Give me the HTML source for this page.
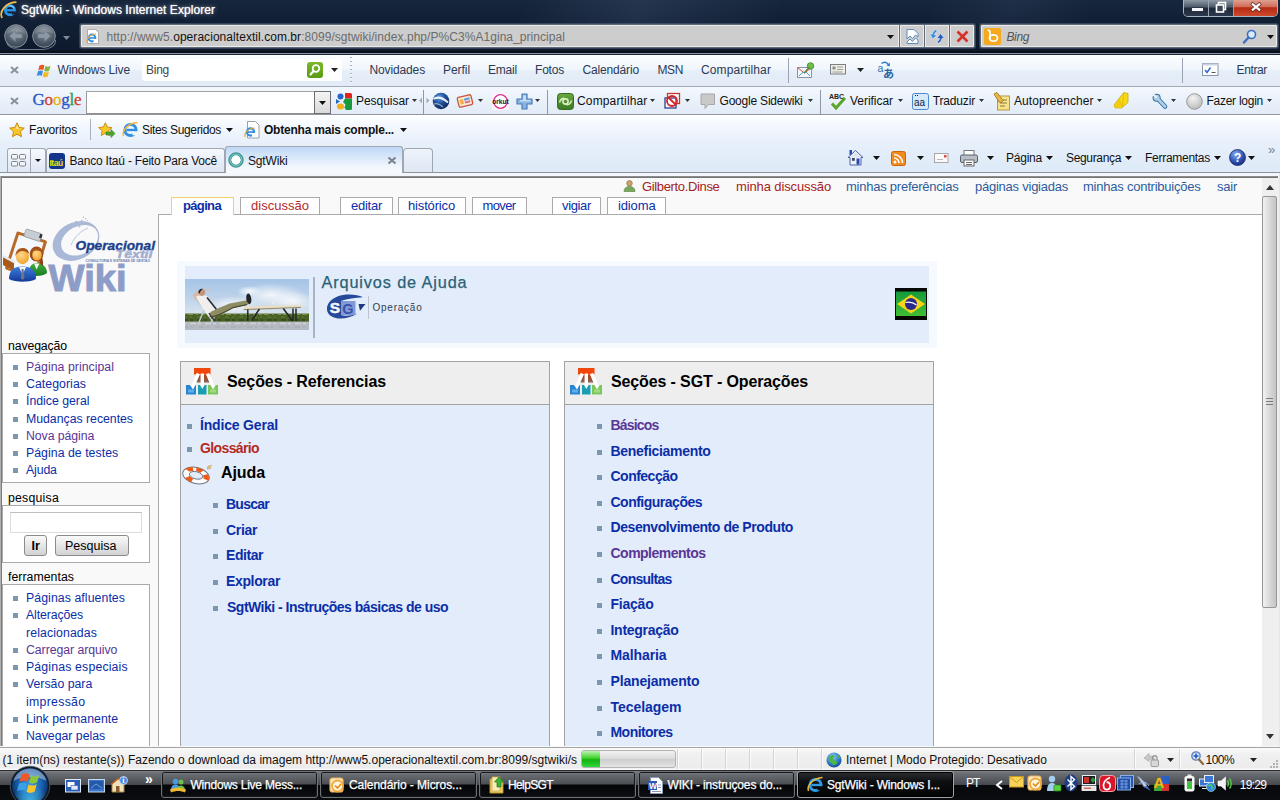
<!DOCTYPE html>
<html lang="pt-BR">
<head>
<meta charset="utf-8">
<title>SgtWiki - Windows Internet Explorer</title>
<style>
*{box-sizing:border-box;margin:0;padding:0}
html,body{width:1280px;height:800px;overflow:hidden;background:#fff}
body{font-family:"Liberation Sans",sans-serif;font-size:12px;color:#000;position:relative}
.abs{position:absolute}
svg{display:block;overflow:visible}
.t{position:absolute;white-space:nowrap}
#page{left:0;top:0;width:1280px;height:746px;background:#f9f9f9;overflow:hidden}
#content{left:158px;top:214px;width:1104px;height:700px;background:#fff;border:1px solid #aaa;border-right:none}
.ptab{position:absolute;top:197px;height:17px;border:1px solid #aaa;border-bottom:none;background:#fff}
.ptab.sel{top:197px;height:18px;border-color:#f5cf6a}
.pbody{position:absolute;left:2px;width:148px;background:#fff;border:1px solid #aaa}
.bul{position:absolute;width:5px;height:5px;background:#7d98ad}
.btn{position:absolute;height:21px;border:1px solid #8b8b8b;border-radius:3px;background:linear-gradient(#fafafa,#e6e6e6 50%,#d2d2d2)}
.sec{position:absolute;width:370px;height:500px;background:#e3ecfa;border:1px solid #a3a3a3}
.sec .hd{position:absolute;left:0;top:0;width:368px;height:43px;background:#eeeeee;border-bottom:1px solid #a3a3a3}
.tbrow{position:absolute;left:0;width:1280px}
.sep{position:absolute;width:1px;background:#9aa4b4}
.tk{position:absolute;top:771px;height:27px;border:1px solid #6e7176;border-radius:3px;background:linear-gradient(#8c8f94 0,#6a6d72 2px,#4b4e53 12px,#050608 13px,#0b0d11 25px);box-shadow:inset 0 0 0 1px #15171a}
.tk.act{background:linear-gradient(#2c2e32,#0d0e10 40%,#040405);border-color:#a0a3a8;box-shadow:inset 0 0 0 1px #000}

</style>
</head>
<body>
<div id="page" class="abs">
<div id="content" class="abs"></div>
<svg class="abs" style="left:623px;top:180px;" width="13" height="12" viewBox="0 0 13 12"><circle cx="6.5" cy="3.3" r="2.8" fill="#c9a36a" stroke="#8a6a3a" stroke-width=".6"/><path d="M1 11.5c0-3.5 2.400-5 5.500-5s5.500 1.500 5.500 5z" fill="#7aa85a" stroke="#55803a" stroke-width=".6"/></svg>
<span class="t" style="left:642px;top:177px;font-size:13px;line-height:19px;color:#a62222;letter-spacing:-0.348px;">Gilberto.Dinse</span>
<span class="t" style="left:736px;top:177px;font-size:13px;line-height:19px;color:#a62222;letter-spacing:-0.122px;">minha discussão</span>
<span class="t" style="left:846px;top:177px;font-size:13px;line-height:19px;color:#2f5c9c;letter-spacing:-0.240px;">minhas preferências</span>
<span class="t" style="left:975px;top:177px;font-size:13px;line-height:19px;color:#2f5c9c;letter-spacing:-0.241px;">páginas vigiadas</span>
<span class="t" style="left:1083px;top:177px;font-size:13px;line-height:19px;color:#2f5c9c;letter-spacing:-0.231px;">minhas contribuições</span>
<span class="t" style="left:1217px;top:177px;font-size:13px;line-height:19px;color:#2f5c9c;letter-spacing:-0.238px;">sair</span>
<div class="ptab sel" style="left:171px;width:63px"></div>
<div class="ptab" style="left:240px;width:80px"></div>
<div class="ptab" style="left:340px;width:53px"></div>
<div class="ptab" style="left:398px;width:68px"></div>
<div class="ptab" style="left:472px;width:55px"></div>
<div class="ptab" style="left:552px;width:49px"></div>
<div class="ptab" style="left:607px;width:59px"></div>
<span class="t" style="left:183px;top:196px;font-size:13px;line-height:19px;color:#0b2ea8;font-weight:bold;letter-spacing:-0.651px;">página</span>
<span class="t" style="left:251px;top:196px;font-size:13px;line-height:19px;color:#b52a2a;letter-spacing:0.021px;">discussão</span>
<span class="t" style="left:351px;top:196px;font-size:13px;line-height:19px;color:#0b2ea8;letter-spacing:-0.255px;">editar</span>
<span class="t" style="left:408px;top:196px;font-size:13px;line-height:19px;color:#0b2ea8;letter-spacing:-0.158px;">histórico</span>
<span class="t" style="left:482.5px;top:196px;font-size:13px;line-height:19px;color:#0b2ea8;letter-spacing:-0.625px;">mover</span>
<span class="t" style="left:562px;top:196px;font-size:13px;line-height:19px;color:#0b2ea8;letter-spacing:-0.346px;">vigiar</span>
<span class="t" style="left:618px;top:196px;font-size:13px;line-height:19px;color:#0b2ea8;letter-spacing:-0.133px;">idioma</span>
<div id="logo" class="abs" style="left:0;top:215px;width:158px;height:90px"><svg width="158" height="90" viewBox="0 0 158 90" style="position:absolute;left:0;top:0">
<defs>
<radialGradient id="fc" cx=".4" cy=".35" r=".7"><stop offset="0" stop-color="#ffd98a"/><stop offset="1" stop-color="#f2a12a"/></radialGradient>
<linearGradient id="bs" x1="0" y1="0" x2="0" y2="1"><stop offset="0" stop-color="#3f7fe0"/><stop offset="1" stop-color="#123a9a"/></linearGradient>
<linearGradient id="gs" x1="0" y1="0" x2="0" y2="1"><stop offset="0" stop-color="#3fae3a"/><stop offset="1" stop-color="#1a7a24"/></linearGradient>
</defs>
<!-- clipboard -->
<g transform="rotate(18 26 40)">
<rect x="10" y="20" width="32" height="40" rx="2" fill="#b86a2a"/>
<rect x="13" y="23" width="26" height="35" fill="#f4f8fc"/>
<rect x="18" y="15" width="17" height="8" rx="1.500" fill="#c8ccd4" stroke="#8a8f98" stroke-width=".6"/>
<rect x="33" y="15.500" width="2.500" height="4" fill="#333"/>
</g>
<path d="M3 42l11 6v8l-11-6z" fill="#a85a1a"/><path d="M3 41l12 6.500" stroke="#e4e8ee" stroke-width="2"/>
<!-- woman -->
<path d="M28.500 60c0-8 3-12 8.500-12s10 4 10 10c-3 3-12 4-18.500 2z" fill="url(#gs)"/>
<path d="M34 48.500l2.500 6 3-6z" fill="#f4f4f4"/>
<ellipse cx="36.500" cy="39" rx="6.800" ry="7.500" fill="#9a4a1a"/>
<ellipse cx="37" cy="40" rx="4.800" ry="5.500" fill="url(#fc)"/>
<path d="M30 39c1-5 5-7 9-6 3 1 4.500 3 4.500 6-2-3-5-4-8-3.500s-4 2-5.500 3.500z" fill="#a8541a"/>
<path d="M42 42c1 4 1.500 7 .5 9l-3-3z" fill="#8a3f14"/>
<!-- man -->
<path d="M9 64c0-8 4-12.500 13.500-12.500S36 56 36 64c-5 3.500-21 3.500-27 0z" fill="url(#bs)"/>
<path d="M19 52l3.500 8 3.500-8z" fill="#f4f6fa"/>
<path d="M21.700 54h1.800l1 9-1.900 2-1.900-2z" fill="#6a7488"/>
<ellipse cx="22.500" cy="42" rx="6.500" ry="7.200" fill="url(#fc)"/>
<path d="M15.500 41c0-5.500 3.500-8.500 8-8 3.500.5 5.500 3 5.500 6-2.500-2.500-6-3.500-9-2.500-2 .7-3.500 2.500-4.500 4.500z" fill="#a8541a"/>
<!-- ring -->
<g transform="rotate(-27 76 26)"><path fill-rule="evenodd" fill="#a9b8d6" d="M51.500 26a24.500 18.500 0 1 0 49 0a24.500 18.500 0 1 0-49 0zM60 27a19.500 14 0 1 1 39 0a19.500 14 0 1 1-39 0z"/></g>
<g fill="#aebcd8"><rect x="72" y="8" width="2" height="2"/><rect x="75" y="6" width="2" height="2"/><rect x="75" y="9.500" width="2" height="2"/><rect x="78" y="7" width="1.800" height="1.800"/><rect x="78.500" y="10.500" width="1.800" height="1.800"/><rect x="81" y="5" width="1.600" height="1.600"/><rect x="81.500" y="8.500" width="1.600" height="1.600"/><rect x="84" y="6.500" width="1.300" height="1.300"/><rect x="85" y="3" width="1.300" height="1.300"/><rect x="83" y="1.500" width="1.200" height="1.200"/><rect x="87" y="5" width="1" height="1"/></g>
<path d="M71 30c4-9 10-14 17-17" fill="none" stroke="#a9b8d6" stroke-width=".8"/>
<text x="75.500" y="34.500" font-family="Liberation Sans,sans-serif" font-size="13.200" font-weight="bold" font-style="italic" fill="#1d3f8c" stroke="#1d3f8c" stroke-width=".35" textLength="79.500" lengthAdjust="spacingAndGlyphs">Operacional</text>
<text x="115.500" y="42.700" font-family="Liberation Sans,sans-serif" font-size="10" font-weight="bold" font-style="italic" fill="#9fadd0" stroke="#9fadd0" stroke-width=".4" textLength="37" lengthAdjust="spacingAndGlyphs">Têxtil</text>
<text x="85.500" y="46.600" font-family="Liberation Sans,sans-serif" font-size="3.600" font-weight="bold" fill="#6a7aa8" textLength="64.500" lengthAdjust="spacingAndGlyphs">CONSULTORIA E SISTEMAS DE GESTÃO</text>
<text x="48.500" y="75.700" font-family="Liberation Sans,sans-serif" font-size="36.500" font-weight="bold" fill="#8e9dc8" stroke="#8e9dc8" stroke-width="1" textLength="78" lengthAdjust="spacingAndGlyphs">Wiki</text>
</svg></div>
<span class="t" style="left:8px;top:337px;font-size:12.3px;line-height:18px;color:#000;letter-spacing:-0.130px;">navegação</span>
<div class="pbody" style="top:353px;height:130px"></div>
<div class="bul" style="left:13px;top:365px"></div>
<span class="t" style="left:26px;top:358px;font-size:12.3px;line-height:18px;color:#5a3696;letter-spacing:0.030px;">Página principal</span>
<div class="bul" style="left:13px;top:382px"></div>
<span class="t" style="left:26px;top:375px;font-size:12.3px;line-height:18px;color:#0b2ea8;letter-spacing:0.053px;">Categorias</span>
<div class="bul" style="left:13px;top:399px"></div>
<span class="t" style="left:26px;top:392px;font-size:12.3px;line-height:18px;color:#0b2ea8;letter-spacing:-0.007px;">Índice geral</span>
<div class="bul" style="left:13px;top:417px"></div>
<span class="t" style="left:26px;top:410px;font-size:12.3px;line-height:18px;color:#0b2ea8;letter-spacing:-0.019px;">Mudanças recentes</span>
<div class="bul" style="left:13px;top:434px"></div>
<span class="t" style="left:26px;top:427px;font-size:12.3px;line-height:18px;color:#5a3696;letter-spacing:-0.078px;">Nova página</span>
<div class="bul" style="left:13px;top:451px"></div>
<span class="t" style="left:26px;top:444px;font-size:12.3px;line-height:18px;color:#0b2ea8;letter-spacing:0.037px;">Página de testes</span>
<div class="bul" style="left:13px;top:468px"></div>
<span class="t" style="left:26px;top:461px;font-size:12.3px;line-height:18px;color:#0b2ea8;letter-spacing:-0.131px;">Ajuda</span>
<span class="t" style="left:8px;top:489px;font-size:12.3px;line-height:18px;color:#000;letter-spacing:0.221px;">pesquisa</span>
<div class="pbody" style="top:505px;height:58px"></div>
<div class="abs" style="left:10px;top:512px;width:132px;height:21px;background:#fff;border:1px solid #dcdcdc;border-top-color:#bdbdbd"></div>
<div class="btn" style="left:24px;top:535px;width:23px"></div>
<div class="btn" style="left:55px;top:535px;width:74px"></div>
<span class="t" style="left:31.5px;top:537px;font-size:12.5px;line-height:18px;color:#000;font-weight:bold;letter-spacing:0.000px;">Ir</span>
<span class="t" style="left:65px;top:537px;font-size:12.5px;line-height:18px;color:#000;letter-spacing:0.000px;">Pesquisa</span>
<span class="t" style="left:8px;top:568px;font-size:12.3px;line-height:18px;color:#000;letter-spacing:0.034px;">ferramentas</span>
<div class="pbody" style="top:584px;height:200px"></div>
<div class="bul" style="left:13px;top:596px"></div>
<span class="t" style="left:26px;top:589px;font-size:12.3px;line-height:18px;color:#0b2ea8;letter-spacing:0.073px;">Páginas afluentes</span>
<div class="bul" style="left:13px;top:613px"></div>
<span class="t" style="left:26px;top:606px;font-size:12.3px;line-height:18px;color:#0b2ea8;letter-spacing:-0.111px;">Alterações</span>
<span class="t" style="left:26px;top:624px;font-size:12.3px;line-height:18px;color:#0b2ea8;letter-spacing:0.105px;">relacionadas</span>
<div class="bul" style="left:13px;top:648px"></div>
<span class="t" style="left:26px;top:641px;font-size:12.3px;line-height:18px;color:#5a3696;letter-spacing:-0.061px;">Carregar arquivo</span>
<div class="bul" style="left:13px;top:665px"></div>
<span class="t" style="left:26px;top:658px;font-size:12.3px;line-height:18px;color:#0b2ea8;letter-spacing:0.157px;">Páginas especiais</span>
<div class="bul" style="left:13px;top:682px"></div>
<span class="t" style="left:26px;top:675px;font-size:12.3px;line-height:18px;color:#0b2ea8;letter-spacing:-0.001px;">Versão para</span>
<span class="t" style="left:26px;top:693px;font-size:12.3px;line-height:18px;color:#0b2ea8;letter-spacing:0.296px;">impressão</span>
<div class="bul" style="left:13px;top:717px"></div>
<span class="t" style="left:26px;top:710px;font-size:12.3px;line-height:18px;color:#0b2ea8;letter-spacing:0.039px;">Link permanente</span>
<div class="bul" style="left:13px;top:734px"></div>
<span class="t" style="left:26px;top:727px;font-size:12.3px;line-height:18px;color:#0b2ea8;letter-spacing:-0.007px;">Navegar pelas</span>
<div class="abs" style="left:177px;top:261px;width:760px;height:87px;background:#f6f9fd"></div>
<div class="abs" style="left:185px;top:266px;width:744px;height:77px;background:#e3ecfa"></div>
<div id="photo" class="abs" style="left:185px;top:279px;width:124px;height:51px"><svg width="124" height="51" viewBox="0 0 124 51" style="position:absolute;left:0;top:0">
<defs><linearGradient id="sky" x1="0" y1="0" x2="0" y2="1"><stop offset="0" stop-color="#a2c2e6"/><stop offset=".45" stop-color="#c3d6ea"/><stop offset=".7" stop-color="#dbe5ef"/><stop offset="1" stop-color="#dbe5ef"/></linearGradient>
<radialGradient id="cl" cx=".5" cy=".5" r=".5"><stop offset="0" stop-color="#fff" stop-opacity=".8"/><stop offset="1" stop-color="#fff" stop-opacity="0"/></radialGradient>
<filter id="pb" x="-5%" y="-5%" width="110%" height="110%"><feGaussianBlur stdDeviation=".45"/></filter>
<clipPath id="pc"><rect width="124" height="51"/></clipPath></defs>
<g clip-path="url(#pc)"><g filter="url(#pb)">
<rect x="-2" y="-2" width="128" height="55" fill="url(#sky)"/>
<ellipse cx="86" cy="16" rx="34" ry="12" fill="url(#cl)"/><ellipse cx="108" cy="22" rx="22" ry="10" fill="url(#cl)"/><ellipse cx="48" cy="26" rx="26" ry="9" fill="url(#cl)"/><ellipse cx="64" cy="12" rx="12" ry="5" fill="url(#cl)"/>
<rect x="-2" y="34.600" width="128" height="9" fill="#4a6126"/>
<path d="M-2 35.400h128" stroke="#7a9246" stroke-width="1.300" stroke-dasharray="3 2 5 3 2 4"/>
<path d="M-2 38h128" stroke="#587432" stroke-width="1.500" stroke-dasharray="4 3 2 5"/>
<path d="M-2 41h128" stroke="#34501a" stroke-width="2.200" stroke-dasharray="5 2 3 4"/>
<rect x="-2" y="42.600" width="128" height="10" fill="#b5b9c1"/>
<path d="M-2 44.500h128" stroke="#cfd2d8" stroke-width="1.400" stroke-dasharray="3 4 6 2"/><path d="M-2 48h128" stroke="#a4a8b2" stroke-width="1.200" stroke-dasharray="5 3 2 6"/>
<!-- chair -->
<path d="M8 16l20 26.500M31 35l-5 8M19 31l-5 12" stroke="#c4c7ce" stroke-width="1.500" fill="none"/>
<!-- table -->
<path d="M58.700 27.600l57.300-1.600v2.600l-57.300 2.200z" fill="#e9dec4"/><path d="M58.700 30.600l57.300-2.200" stroke="#7a6e58" stroke-width=".8"/>
<path d="M62.800 30.500v11M74.400 30l-7.600 11.500M98.300 29.500l9.200 12.500M108 29.500v12.500M111 29.500v12.500" stroke="#23262a" stroke-width="1.500" fill="none"/>
<!-- laptop -->
<path d="M87 25.400l4.200-8.900" stroke="#e9eef4" stroke-width="1.100"/><path d="M81.500 26.200h6" stroke="#d9dee6" stroke-width="1.100"/>
<!-- man -->
<path d="M8.500 15.500c1.500-2.500 4-3 6-2l-1 5.500-3.500 2z" fill="#d9b9a4"/>
<path d="M11 17.500c3.500-1.800 8.500-1.800 12 0l8 12.500c-1.500 3.500-4.500 6-7.500 7l-6-7.500z" fill="#f0efee"/>
<path d="M22 18.500l9.500 12" stroke="#2b2b30" stroke-width="1.600"/>
<circle cx="16.800" cy="13.600" r="3.300" fill="#c39474"/>
<path d="M13.300 13.500c.2-3 2.500-4.300 4.800-3.600-1.800 1-3 2.300-3.300 4.600z" fill="#2a2320"/>
<path d="M20 11.500l5.500-1.200" stroke="#dcc0ac" stroke-width="1.100"/>
<path d="M25.500 33c5-2.800 12-5.500 19-8.500l17.500-3.200 1.300 4.200-16 3.700c-6 3.200-12 7-18.500 9.300-3.500-.2-4.300-3-3.300-5.500z" fill="#8e8c63"/>
<path d="M27 38c7-1.500 14-5.500 21-9.300l14-3" stroke="#4c4a34" stroke-width="1.300" fill="none"/>
<ellipse cx="63.800" cy="19.800" rx="2.500" ry="5.400" fill="#22242a" transform="rotate(-8 63.800 19.800)"/>
<path d="M24 34c1.500 3 3 5.500 6 8" stroke="#3a3a3a" stroke-width="1.400" fill="none"/>
</g></g>
</svg></div>
<div class="abs" style="left:313px;top:277px;width:2px;height:61px;background:#a9b3c2"></div>
<span class="t" style="left:321.5px;top:271px;font-size:16.3px;line-height:22px;color:#2a6276;letter-spacing:0.868px;-webkit-text-stroke:.25px #2a6276;">Arquivos de Ajuda</span>
<div id="sgt" class="abs" style="left:326px;top:294px;width:40px;height:26px"><svg width="40" height="26" viewBox="0 0 40 26" style="position:absolute;left:0;top:0">
<path d="M37 3.200C31 .300 20-.800 11.500 2.500 2.500 6-1.500 13.500 2.500 19.800 6.500 25.500 20 26.800 31.500 19.500 25.500 21.800 19 22 15.500 21.300L15.500 6.800C21 5 29 3.500 37 3.200z" fill="#27499b"/>
<rect x="15.500" y="7" width="14" height="14" fill="#8299d6"/>
<text x="3.800" y="19.300" font-family="Liberation Sans,sans-serif" font-size="15.500" font-weight="bold" fill="#f6f8fc" stroke="#f6f8fc" stroke-width=".5">S</text>
<text x="16.300" y="19.600" font-family="Liberation Sans,sans-serif" font-size="14.500" font-weight="bold" fill="#3554ac">G</text>
<path d="M32.500 10h7l-5.500 6.800z" fill="#1e3884"/>
</svg></div>
<div class="abs" style="left:368px;top:296px;width:1px;height:23px;background:#bcc3ce"></div>
<span class="t" style="left:372.5px;top:300px;font-size:10px;line-height:15px;color:#2e3e52;letter-spacing:0.760px;">Operação</span>
<div id="flag" class="abs" style="left:895px;top:288px;width:32px;height:32px"><svg width="32" height="32" viewBox="0 0 32 32" style="position:absolute;left:0;top:0">
<defs><linearGradient id="fg" x1="0" y1="0" x2="0" y2="1"><stop offset="0" stop-color="#159a3c"/><stop offset="1" stop-color="#41bd35"/></linearGradient></defs>
<rect width="32" height="32" fill="#050805"/>
<rect x="1" y="3.500" width="30" height="24.500" fill="url(#fg)"/>
<path d="M2 16l14-9.500 14 9.500-14 9.500z" fill="#f7d417"/>
<circle cx="16" cy="16" r="6" fill="#2a2a8a"/>
<path d="M10.500 14.500c4-1 8 0 11 2.500" fill="none" stroke="#fff" stroke-width="1.100"/>
</svg></div>
<div class="sec" style="left:180px;top:361px"><div class="hd"></div></div>
<div class="sec" style="left:564px;top:361px"><div class="hd"></div></div>
<svg class="abs" style="left:186px;top:368px" width="33" height="28" viewBox="0 0 33 28">
<defs><linearGradient id="wg186" x1="0" y1="0" x2="0" y2="1"><stop offset="0" stop-color="#c23a10"/><stop offset="1" stop-color="#6a3a22" stop-opacity=".75"/></linearGradient></defs>
<rect x="8" y="0" width="16.500" height="6.500" fill="#f0470c"/>
<path d="M13.800 6.500h1v8h-5z" fill="url(#wg186)"/><path d="M18 6.500h2l3.500 8h-5.500z" fill="url(#wg186)"/>
<path d="M12.300 5.500l-5.300 12.500M16.300 5.500v13.500M21.700 5.500l5 12.500" stroke="#fff" stroke-width="3.300"/>
<rect x="0" y="17" width="10" height="9.500" fill="#2a86d0"/><rect x="12" y="17" width="8.500" height="9.500" fill="#1a9fb2"/><rect x="22" y="17" width="10" height="9.500" fill="#7cc65c"/>
<path d="M4 17l3 4.500 2.500-4.500M14 17l2.300 4 2.300-4M24.500 17l2.500 4.500 2.800-4.500" fill="#fff"/>
<rect x="2" y="21.500" width="6" height="3" fill="#6ab8f0" opacity=".8"/><rect x="24" y="21.500" width="6" height="3" fill="#a8e08a" opacity=".8"/>
</svg>
<svg class="abs" style="left:570px;top:368px" width="33" height="28" viewBox="0 0 33 28">
<defs><linearGradient id="wg570" x1="0" y1="0" x2="0" y2="1"><stop offset="0" stop-color="#c23a10"/><stop offset="1" stop-color="#6a3a22" stop-opacity=".75"/></linearGradient></defs>
<rect x="8" y="0" width="16.500" height="6.500" fill="#f0470c"/>
<path d="M13.800 6.500h1v8h-5z" fill="url(#wg570)"/><path d="M18 6.500h2l3.500 8h-5.500z" fill="url(#wg570)"/>
<path d="M12.300 5.500l-5.300 12.500M16.300 5.500v13.500M21.700 5.500l5 12.500" stroke="#fff" stroke-width="3.300"/>
<rect x="0" y="17" width="10" height="9.500" fill="#2a86d0"/><rect x="12" y="17" width="8.500" height="9.500" fill="#1a9fb2"/><rect x="22" y="17" width="10" height="9.500" fill="#7cc65c"/>
<path d="M4 17l3 4.500 2.500-4.500M14 17l2.300 4 2.300-4M24.500 17l2.500 4.500 2.800-4.500" fill="#fff"/>
<rect x="2" y="21.500" width="6" height="3" fill="#6ab8f0" opacity=".8"/><rect x="24" y="21.500" width="6" height="3" fill="#a8e08a" opacity=".8"/>
</svg>
<span class="t" style="left:227px;top:370px;font-size:16px;line-height:23px;color:#000;font-weight:bold;letter-spacing:-0.099px;">Seções - Referencias</span>
<span class="t" style="left:611px;top:370px;font-size:16px;line-height:23px;color:#000;font-weight:bold;letter-spacing:-0.128px;">Seções - SGT - Operações</span>
<div class="bul" style="left:187px;top:424px"></div><span class="t" style="left:200px;top:415px;font-size:14px;line-height:20px;color:#0b2ea8;font-weight:bold;letter-spacing:-0.180px;">Índice Geral</span>
<div class="bul" style="left:187px;top:447px"></div><span class="t" style="left:200px;top:438px;font-size:14px;line-height:20px;color:#b52a1f;font-weight:bold;letter-spacing:-0.622px;">Glossário</span>
<svg class="abs" style="left:181px;top:463px" width="32" height="24" viewBox="0 0 32 24">
<g transform="rotate(14 15 12.500)">
<ellipse cx="15" cy="12.500" rx="13.500" ry="8" fill="#fbfbfb" stroke="#6c727c" stroke-width="1"/>
<path d="M3 8.500a13.500 8 0 0 1 6.500-3.500l2 3.500a7 3.800 0 0 0-3.500 2z" fill="#ee5a14"/>
<path d="M13.500 4.600a13.500 8 0 0 1 7.500 1l-2.500 3.200a7 3.800 0 0 0-4.500-.6z" fill="#ee5a14"/>
<path d="M26 8.500a13.500 8 0 0 1 2.300 6l-5.500-.8a7 3.800 0 0 0-1.300-3z" fill="#ee5a14"/>
<path d="M5 17.500a13.500 8 0 0 0 7 2.800l1-4a7 3.800 0 0 1-4-1.800z" fill="#ee5a14"/>
<ellipse cx="15" cy="12.300" rx="6.800" ry="3.600" fill="#e3ecfa" stroke="#6c727c" stroke-width=".9"/>
</g>
<path d="M27 6.500c-1.500-2 .5-4 2-3s0 2.500-1 2 1-3.500 3-3" fill="none" stroke="#d4b070" stroke-width="1.100"/>
</svg>
<span class="t" style="left:221px;top:461px;font-size:16px;line-height:23px;color:#000;font-weight:bold;letter-spacing:-0.091px;">Ajuda</span>
<div class="bul" style="left:213px;top:503px"></div><span class="t" style="left:226px;top:494px;font-size:14px;line-height:20px;color:#0b2ea8;font-weight:bold;letter-spacing:-0.745px;">Buscar</span>
<div class="bul" style="left:213px;top:529px"></div><span class="t" style="left:226px;top:520px;font-size:14px;line-height:20px;color:#0b2ea8;font-weight:bold;letter-spacing:-0.338px;">Criar</span>
<div class="bul" style="left:213px;top:554px"></div><span class="t" style="left:226px;top:545px;font-size:14px;line-height:20px;color:#0b2ea8;font-weight:bold;letter-spacing:-0.448px;">Editar</span>
<div class="bul" style="left:213px;top:580px"></div><span class="t" style="left:226px;top:571px;font-size:14px;line-height:20px;color:#0b2ea8;font-weight:bold;letter-spacing:-0.352px;">Explorar</span>
<div class="bul" style="left:213px;top:606px"></div><span class="t" style="left:227px;top:597px;font-size:14px;line-height:20px;color:#0b2ea8;font-weight:bold;letter-spacing:-0.506px;">SgtWiki - Instruções básicas de uso</span>
<div class="bul" style="left:597px;top:424px"></div><span class="t" style="left:610.5px;top:415px;font-size:14px;line-height:20px;color:#5a3696;font-weight:bold;letter-spacing:-0.815px;">Básicos</span>
<div class="bul" style="left:597px;top:450px"></div><span class="t" style="left:610.5px;top:441px;font-size:14px;line-height:20px;color:#0b2ea8;font-weight:bold;letter-spacing:-0.304px;">Beneficiamento</span>
<div class="bul" style="left:597px;top:475px"></div><span class="t" style="left:610.5px;top:466px;font-size:14px;line-height:20px;color:#0b2ea8;font-weight:bold;letter-spacing:-0.509px;">Confecção</span>
<div class="bul" style="left:597px;top:501px"></div><span class="t" style="left:610.5px;top:492px;font-size:14px;line-height:20px;color:#0b2ea8;font-weight:bold;letter-spacing:-0.501px;">Configurações</span>
<div class="bul" style="left:597px;top:526px"></div><span class="t" style="left:610.5px;top:517px;font-size:14px;line-height:20px;color:#0b2ea8;font-weight:bold;letter-spacing:-0.431px;">Desenvolvimento de Produto</span>
<div class="bul" style="left:597px;top:552px"></div><span class="t" style="left:610.5px;top:543px;font-size:14px;line-height:20px;color:#5a3696;font-weight:bold;letter-spacing:-0.510px;">Complementos</span>
<div class="bul" style="left:597px;top:578px"></div><span class="t" style="left:610.5px;top:569px;font-size:14px;line-height:20px;color:#0b2ea8;font-weight:bold;letter-spacing:-0.743px;">Consultas</span>
<div class="bul" style="left:597px;top:603px"></div><span class="t" style="left:610.5px;top:594px;font-size:14px;line-height:20px;color:#0b2ea8;font-weight:bold;letter-spacing:-0.227px;">Fiação</span>
<div class="bul" style="left:597px;top:629px"></div><span class="t" style="left:610.5px;top:620px;font-size:14px;line-height:20px;color:#0b2ea8;font-weight:bold;letter-spacing:-0.281px;">Integração</span>
<div class="bul" style="left:597px;top:654px"></div><span class="t" style="left:610.5px;top:645px;font-size:14px;line-height:20px;color:#0b2ea8;font-weight:bold;letter-spacing:-0.102px;">Malharia</span>
<div class="bul" style="left:597px;top:680px"></div><span class="t" style="left:610.5px;top:671px;font-size:14px;line-height:20px;color:#0b2ea8;font-weight:bold;letter-spacing:-0.169px;">Planejamento</span>
<div class="bul" style="left:597px;top:706px"></div><span class="t" style="left:610.5px;top:697px;font-size:14px;line-height:20px;color:#0b2ea8;font-weight:bold;letter-spacing:-0.038px;">Tecelagem</span>
<div class="bul" style="left:597px;top:731px"></div><span class="t" style="left:610.5px;top:722px;font-size:14px;line-height:20px;color:#0b2ea8;font-weight:bold;letter-spacing:-0.543px;">Monitores</span>
<div class="abs" style="left:0px;top:172px;width:1280px;height:1px;background:#8e949c"></div>
<div class="abs" style="left:0px;top:173px;width:1280px;height:3px;background:#f3f6fb"></div>
<div class="abs" style="left:0px;top:176px;width:1278px;height:1px;background:#8c8c8c"></div>
<div class="abs" style="left:0px;top:177px;width:1278px;height:1px;background:#747474"></div>
<div class="abs" style="left:0px;top:176px;width:1px;height:570px;background:#b0b0b0"></div>
<div class="abs" style="left:1px;top:176px;width:1px;height:570px;background:#7c7c7c"></div>
<div class="abs" style="left:1262px;top:178px;width:17px;height:568px;background:#efefef"></div>
<div class="abs" style="left:1279px;top:173px;width:1px;height:573px;background:#dfe6f0"></div>
<div class="abs" style="left:1262px;top:196px;width:15px;height:412px;background:linear-gradient(90deg,#f2f2f2,#dcdcdc 45%,#c4c4c4);border:1px solid #979797;border-radius:2px"></div>
<svg class="abs" style="left:1266px;top:185px;" width="8" height="5" viewBox="0 0 8 5"><path d="M0 5l4-5 4 5z" fill="#333"/></svg>
<svg class="abs" style="left:1266px;top:734px;" width="8" height="5" viewBox="0 0 8 5"><path d="M0 0l4 5 4-5z" fill="#333"/></svg>
<div class="abs" style="left:1266px;top:398px;width:7px;height:1px;background:#7a7a7a"></div>
<div class="abs" style="left:1266px;top:401px;width:7px;height:1px;background:#7a7a7a"></div>
<div class="abs" style="left:1266px;top:404px;width:7px;height:1px;background:#7a7a7a"></div>
</div>
<div class="abs" style="left:0px;top:0px;width:1280px;height:55px;background:linear-gradient(#16263c 0,#122036 18px,#0f1c30 40px,#0d192b 51px,#081019 51px,#081019 53px,#8995a6 53px,#8995a6 54px,#1a2536 54px,#1a2536 55px)"></div>
<div class="abs" style="left:520px;top:0px;width:260px;height:24px;background:linear-gradient(110deg,rgba(255,255,255,0) 0,rgba(130,160,200,.13) 45%,rgba(255,255,255,0) 100%)"></div>
<div class="abs" style="left:930px;top:0px;width:160px;height:24px;background:linear-gradient(110deg,rgba(255,255,255,0) 0,rgba(130,160,200,.08) 50%,rgba(255,255,255,0) 100%)"></div>
<svg class="abs" style="left:0px;top:0px;" width="17" height="19" viewBox="0 0 17 19"><circle cx="10" cy="10.200" r="4.600" fill="none" stroke="#2a96ea" stroke-width="2.700"/><rect x="6.500" y="9.100" width="8.500" height="2.300" fill="#2a96ea"/><path d="M11.800 11.400h5.500v3.200h-5.500z" fill="#14233a"/><path d="M9 5.800a4.600 4.600 0 0 1 5 2.500" fill="none" stroke="#7fd4fa" stroke-width="1.200"/><path d="M1.800 17.300C-.800 11.500 5.500 3 15.800 2.200" fill="none" stroke="#f2c14a" stroke-width="1.700" stroke-linecap="round"/></svg>
<span class="t" style="left:21px;top:2px;font-size:12px;line-height:16px;color:#fff;letter-spacing:0.055px;text-shadow:0 0 5px rgba(255,255,255,.6),0 0 1px rgba(255,255,255,.8);">SgtWiki - Windows Internet Explorer</span>
<div class="abs" style="left:1183px;top:0px;width:95px;height:17px;border:1px solid #aab4c2;border-top:none;border-radius:0 0 5px 5px;background:#1c2a3e;overflow:hidden"><div class="abs" style="left:0px;top:0px;width:25px;height:16px;background:linear-gradient(#8f99a6,#4b5666 45%,#1d2838 50%,#2c394c);border-right:1px solid #9aa3ad"></div><div class="abs" style="left:25px;top:0px;width:25px;height:16px;background:linear-gradient(#8f99a6,#4b5666 45%,#1d2838 50%,#2c394c);border-right:1px solid #9aa3ad"></div><div class="abs" style="left:50px;top:0px;width:44px;height:16px;background:linear-gradient(#dfa092,#cf6a56 44%,#b42a12 48%,#cf4a2c)"></div></div>
<div class="abs" style="left:1192px;top:8px;width:11px;height:3px;background:#f4f6fa;box-shadow:0 0 0 1px rgba(40,50,70,.8)"></div>
<svg class="abs" style="left:1215px;top:1px;" width="12" height="12" viewBox="0 0 12 12"><rect x="3.500" y="1.500" width="7" height="7" fill="none" stroke="#fff" stroke-width="1.600"/><rect x="1.500" y="4" width="7" height="7" fill="#3a4656" stroke="#fff" stroke-width="1.600"/></svg>
<svg class="abs" style="left:1250px;top:2px;" width="12" height="10" viewBox="0 0 12 10"><path d="M2.800 2.300l6.400 5.400M9.200 2.300l-6.400 5.400" stroke="#5a2a22" stroke-width="3.600" stroke-linecap="square"/><path d="M2.800 2.300l6.400 5.400M9.200 2.300l-6.400 5.400" stroke="#fff" stroke-width="2.200" stroke-linecap="square"/></svg>
<div class="abs" style="left:6px;top:40px;width:50px;height:10px;border:1px solid #6e7a88;border-top:none;border-radius:0 0 14px 14px / 0 0 9px 9px;background:transparent"></div>
<svg class="abs" style="left:4px;top:24px;" width="24" height="24" viewBox="0 0 24 24"><defs><radialGradient id="g16" cx=".5" cy=".3" r=".7"><stop offset="0" stop-color="#7f8a97"/><stop offset=".6" stop-color="#56626f"/><stop offset="1" stop-color="#36414e"/></radialGradient></defs><circle cx="12" cy="12" r="11.300" fill="url(#g16)" stroke="#8b95a2" stroke-width="1"/><path d="M2.500 10a9.500 8 0 0 1 19 0a14 9 0 0 0-19 0z" fill="rgba(255,255,255,.15)"/><path d="M5.500 12l6-5.500v3.500h6.500v4h-6.500v3.500z" fill="#8d98a5" stroke="#727d8a" stroke-width=".5"/></svg>
<svg class="abs" style="left:32px;top:24px;" width="24" height="24" viewBox="0 0 24 24"><defs><radialGradient id="g44" cx=".5" cy=".3" r=".7"><stop offset="0" stop-color="#7f8a97"/><stop offset=".6" stop-color="#56626f"/><stop offset="1" stop-color="#36414e"/></radialGradient></defs><circle cx="12" cy="12" r="11.300" fill="url(#g44)" stroke="#8b95a2" stroke-width="1"/><path d="M2.500 10a9.500 8 0 0 1 19 0a14 9 0 0 0-19 0z" fill="rgba(255,255,255,.15)"/><path d="M18.500 12l-6-5.500v3.500h-6.500v4h6.500v3.500z" fill="#8d98a5" stroke="#727d8a" stroke-width=".5"/></svg>
<svg class="abs" style="left:63px;top:36px;" width="7" height="4" viewBox="0 0 7 4"><path d="M0 0h7l-3.5 4z" fill="#7d8997"/></svg>
<div class="abs" style="left:80px;top:24px;width:895px;height:24px;border:1px solid #5f6b79;border-radius:2px;background:#cdcdcd;box-shadow:inset 0 0 0 1px #ebebeb,0 0 0 1px rgba(120,135,155,.35)"></div>
<div class="abs" style="left:898px;top:25px;width:1px;height:22px;background:#ebebeb"></div>
<div class="abs" style="left:899px;top:25px;width:1px;height:22px;background:#5f6b79"></div>
<div class="abs" style="left:900px;top:25px;width:1px;height:22px;background:#ebebeb"></div>
<div class="abs" style="left:923px;top:25px;width:1px;height:22px;background:#ebebeb"></div>
<div class="abs" style="left:924px;top:25px;width:1px;height:22px;background:#5f6b79"></div>
<div class="abs" style="left:925px;top:25px;width:1px;height:22px;background:#ebebeb"></div>
<div class="abs" style="left:948px;top:25px;width:1px;height:22px;background:#ebebeb"></div>
<div class="abs" style="left:949px;top:25px;width:1px;height:22px;background:#5f6b79"></div>
<div class="abs" style="left:950px;top:25px;width:1px;height:22px;background:#ebebeb"></div>
<svg class="abs" style="left:86px;top:29px;" width="14" height="15" viewBox="0 0 14 15"><path d="M1.500.5h8l3 3v11h-11z" fill="#fff" stroke="#9a9a9a" stroke-width=".8"/><circle cx="6" cy="9" r="3.400" fill="none" stroke="#2f8fe0" stroke-width="2"/><rect x="3.500" y="8.200" width="5.500" height="1.600" fill="#2f8fe0"/><path d="M7.500 9.900h4v3h-4z" fill="#fff"/><path d="M1 13.500C0 9 4.500 5 10 5" fill="none" stroke="#e8a93a" stroke-width="1.100"/></svg>
<span class="t" style="left:106.5px;top:29px;font-size:12px;line-height:16px;color:#6b6b6b;letter-spacing:0.052px;">http://www5.<span style="color:#111">operacionaltextil.com.br</span>:8099/sgtwiki/index.php/P%C3%A1gina_principal</span>
<svg class="abs" style="left:887px;top:35px;" width="7" height="4" viewBox="0 0 7 4"><path d="M0 0h7l-3.5 4z" fill="#111"/></svg>
<svg class="abs" style="left:906px;top:29px;" width="13" height="15" viewBox="0 0 13 15"><path d="M1 .500h7l4 4v3.500l-2.500-2-3 3.500-2.500-2.500-3 3z" fill="#fff" stroke="#5a8ac0" stroke-width="1"/><path d="M1 13l3-3 2.500 2.500 3-3.500 2.500 2v3.500h-11z" fill="#fff" stroke="#5a8ac0" stroke-width="1"/></svg>
<svg class="abs" style="left:929px;top:29px;" width="16" height="15" viewBox="0 0 16 15"><path d="M6.500.500c-2 1.500-3 3-3.300 4.800l-2.700-.800 3.200 5.500 4.300-3.500-2.500-.700c.400-1.500 1.300-2.800 3-3.800z" fill="#3a8ee0" stroke="#eaf3fc" stroke-width=".6"/><path d="M11.500 4.500l4 5h-2.600c-.200 2-1.200 3.600-3.400 4.800l-1.500-1.500c1.500-.800 2.300-1.800 2.500-3.300h-2.700z" fill="#2a5cb8" stroke="#eaf3fc" stroke-width=".6"/></svg>
<svg class="abs" style="left:956px;top:30px;" width="13" height="13" viewBox="0 0 13 13"><path d="M1.500 1.500l10 10M11.500 1.500l-10 10" stroke="#d6302a" stroke-width="2.600"/></svg>
<div class="abs" style="left:980px;top:24px;width:298px;height:24px;border:1px solid #5f6b79;border-radius:2px;background:#cdcdcd;box-shadow:inset 0 0 0 1px #ebebeb,0 0 0 1px rgba(120,135,155,.35)"></div>
<div class="abs" style="left:984px;top:28px;width:17px;height:17px;background:#f6a81e;border-radius:2px"></div>
<svg class="abs" style="left:984px;top:28px;" width="17" height="17" viewBox="0 0 17 17"><path d="M3.500 2.500c1.500-.500 2.500 0 2.500 1.500v7" fill="none" stroke="#fff" stroke-width="1.700"/><ellipse cx="9.500" cy="10" rx="4" ry="3.200" fill="none" stroke="#fff" stroke-width="1.800"/></svg>
<span class="t" style="left:1006.5px;top:29px;font-size:12px;line-height:16px;color:#555;font-style:italic;letter-spacing:-0.383px;">Bing</span>
<svg class="abs" style="left:1243px;top:29px;" width="15" height="15" viewBox="0 0 15 15"><circle cx="8.500" cy="5.500" r="4" fill="#dbe9f8" stroke="#3b6fc0" stroke-width="1.600"/><path d="M5.500 8.500l-4.500 5" stroke="#3b6fc0" stroke-width="2.400" stroke-linecap="round"/></svg>
<svg class="abs" style="left:1267px;top:35px;" width="7" height="4" viewBox="0 0 7 4"><path d="M0 0h7l-3.5 4z" fill="#111"/></svg>
<div class="abs" style="left:0px;top:55px;width:1280px;height:31px;background:linear-gradient(#fbfdff 0,#f1f6fc 14px,#e6eef8 16px,#e2ebf6 31px)"></div>
<div class="abs" style="left:0px;top:86px;width:1280px;height:1px;background:#a3abb8"></div>
<div class="abs" style="left:0px;top:87px;width:1280px;height:27px;background:linear-gradient(#f3f8fd,#e9f1fa 50%,#e2ebf7)"></div>
<div class="abs" style="left:0px;top:114px;width:1280px;height:1px;background:#8f97a3"></div>
<div class="abs" style="left:0px;top:115px;width:1280px;height:30px;background:linear-gradient(#ffffff,#f2f7fd 40%,#e6effa)"></div>
<div class="abs" style="left:0px;top:145px;width:1280px;height:27px;background:linear-gradient(#e6effa,#deeaf8)"></div>
<div class="abs" style="left:0px;top:172px;width:1280px;height:1px;background:#8e949c"></div>
<svg class="abs" style="left:10px;top:66px;" width="9" height="8" viewBox="0 0 9 8"><path d="M1 1l7 6M8 1l-7 6" stroke="#8a8f98" stroke-width="2"/></svg>
<svg class="abs" style="left:37px;top:64px;" width="16" height="13" viewBox="0 0 16 13"><path d="M2.500 1.500c2-1 3.500-1 5 0l-1.300 4.800c-1.500-1-3-1-5 0z" fill="#e8562a"/><path d="M8.500 2c1.500 1 3 1 5-.2l-1.300 4.800c-2 1.200-3.500 1.200-5 .2z" fill="#7cba3a"/><path d="M1 7.300c2-1 3.500-1 5 0l-1.300 4.800c-1.500-1-3-1-5 0z" fill="#3a8fd8"/><path d="M7 7.800c1.500 1 3 1 5-.2l-1.300 4.800c-2 1.200-3.500 1.200-5 .2z" fill="#f3b92b"/></svg>
<span class="t" style="left:57.5px;top:62px;font-size:12px;line-height:16px;color:#2c3a55;letter-spacing:-0.128px;">Windows Live</span>
<div class="abs" style="left:142px;top:59px;width:200px;height:22px;background:#fff;border-radius:4px 0 0 4px"></div>
<span class="t" style="left:146px;top:62px;font-size:12px;line-height:16px;color:#444;letter-spacing:-0.258px;">Bing</span>
<div class="abs" style="left:307px;top:62px;width:16px;height:16px;background:linear-gradient(#7cb82a,#5a9a14);border-radius:3px"></div>
<svg class="abs" style="left:307px;top:62px;" width="16" height="16" viewBox="0 0 16 16"><circle cx="9" cy="6.500" r="3.300" fill="none" stroke="#fff" stroke-width="1.800"/><path d="M6.600 9l-3.100 3.500" stroke="#fff" stroke-width="2.200" stroke-linecap="round"/></svg>
<svg class="abs" style="left:331px;top:68px;" width="7" height="4" viewBox="0 0 7 4"><path d="M0 0h7l-3.5 4z" fill="#222"/></svg>
<div class="abs" style="left:350px;top:57px;width:2px;height:26px;background:repeating-linear-gradient(#aab2c0 0 1.5px,#f4f7fb 1.5px 2.2px,transparent 2.2px 4px)"></div>
<span class="t" style="left:369.5px;top:62px;font-size:12px;line-height:16px;color:#2c3a55;letter-spacing:-0.134px;">Novidades</span>
<span class="t" style="left:443px;top:62px;font-size:12px;line-height:16px;color:#2c3a55;letter-spacing:-0.057px;">Perfil</span>
<span class="t" style="left:488px;top:62px;font-size:12px;line-height:16px;color:#2c3a55;letter-spacing:-0.203px;">Email</span>
<span class="t" style="left:535px;top:62px;font-size:12px;line-height:16px;color:#2c3a55;letter-spacing:-0.203px;">Fotos</span>
<span class="t" style="left:582.5px;top:62px;font-size:12px;line-height:16px;color:#2c3a55;letter-spacing:-0.155px;">Calendário</span>
<span class="t" style="left:657.5px;top:62px;font-size:12px;line-height:16px;color:#2c3a55;letter-spacing:-0.391px;">MSN</span>
<span class="t" style="left:701px;top:62px;font-size:12px;line-height:16px;color:#2c3a55;letter-spacing:0.108px;">Compartilhar</span>
<div class="abs" style="left:788px;top:58px;width:1px;height:25px;background:#9aa3b2"></div>
<svg class="abs" style="left:797px;top:62px;" width="18" height="16" viewBox="0 0 18 16"><rect x=".500" y="5.500" width="14" height="10" fill="#f4f6fa" stroke="#8a94a6" stroke-width="1"/><path d="M1 6l6.500 5 6.500-5" fill="none" stroke="#d05050" stroke-width="1"/><path d="M2 14l4-4M13 14l-4-4" stroke="#4aa0d8" stroke-width="1"/><circle cx="13.500" cy="4" r="3.300" fill="#6cc04a" stroke="#3f8a2a" stroke-width=".8"/><path d="M7 11l5.500-6" stroke="#4a8a3a" stroke-width="1.200"/></svg>
<svg class="abs" style="left:830px;top:64px;" width="17" height="11" viewBox="0 0 17 11"><rect x=".500" y=".500" width="15" height="9.500" fill="#f1ede0" stroke="#7b7f86" stroke-width="1"/><rect x="2.500" y="2.500" width="3" height="3" fill="#8a8f98"/><path d="M7 3h6M7 5.500h6M2.500 8h10" stroke="#9a9fa8" stroke-width="1"/></svg>
<svg class="abs" style="left:857px;top:68px;" width="7" height="4" viewBox="0 0 7 4"><path d="M0 0h7l-3.5 4z" fill="#222"/></svg>
<svg class="abs" style="left:877px;top:60px;" width="17" height="19" viewBox="0 0 17 19"><text x=".500" y="11.500" font-family="Liberation Sans,sans-serif" font-size="10.500" fill="#2a6fb4">a</text><text x="6" y="18" font-family="Liberation Sans,Noto Sans CJK JP,sans-serif" font-size="11" font-weight="bold" fill="#2a62a4">あ</text><path d="M4 3c2.500-2.300 5.500-2 7.500.800l1.500-1-.300 3.800-3.500-1.300 1.300-.800c-1.500-1.800-3.500-2-5.500-.500z" fill="#2a7ad0"/></svg>
<div class="abs" style="left:1182px;top:58px;width:1px;height:25px;background:#9aa3b2"></div>
<svg class="abs" style="left:1202px;top:63px;" width="17" height="13" viewBox="0 0 17 13"><rect x=".500" y=".500" width="15.500" height="12" fill="#fff" stroke="#8a94a6" stroke-width="1"/><rect x=".500" y=".500" width="15.500" height="2" fill="#c8d4e6"/><path d="M3 7l2 2.500 3.500-5" fill="none" stroke="#2a6ad0" stroke-width="1.500"/><path d="M9.500 9.500h4" stroke="#555" stroke-width="1"/></svg>
<span class="t" style="left:1236.5px;top:62px;font-size:12px;line-height:16px;color:#2c3a55;letter-spacing:-0.365px;">Entrar</span>
<svg class="abs" style="left:10px;top:97px;" width="9" height="8" viewBox="0 0 9 8"><path d="M1 1l7 6M8 1l-7 6" stroke="#8a8f98" stroke-width="2"/></svg>
<span class="t" style="left:32.500px;top:87px;line-height:26px;font-family:'Liberation Serif',serif;font-size:17px;letter-spacing:-.2px;-webkit-text-stroke:.3px currentColor"><span style="color:#2a56c6">G</span><span style="color:#d23f31">o</span><span style="color:#e8b000">o</span><span style="color:#2a56c6">g</span><span style="color:#2f9e44">l</span><span style="color:#d23f31">e</span></span>
<div class="abs" style="left:86px;top:91px;width:229px;height:23px;background:#fff;border:1px solid #e3e3e3;border-top:1px solid #a2a2a2;border-left:1px solid #9a9a9a;border-bottom:1px solid #8e8e8e"></div>
<div class="abs" style="left:314px;top:91px;width:17px;height:23px;background:linear-gradient(#f4f4f4,#d9d9d9);border:1px solid #6f6f6f"></div>
<svg class="abs" style="left:319px;top:101px;" width="7" height="4" viewBox="0 0 7 4"><path d="M0 0h7l-3.5 4z" fill="#111"/></svg>
<svg class="abs" style="left:336px;top:93px;" width="16" height="17" viewBox="0 0 16 17"><circle cx="4.500" cy="3.500" r="3" fill="#2a66c8"/><path d="M9 0h5.500a1.500 1.500 0 0 1 1.500 1.500v4h-7z" fill="#e0231c"/><path d="M0 6l4 2.500-4 2.500z" fill="#2a66c8"/><path d="M9 5.500h7v10a1.500 1.500 0 0 1-1.500 1.500h-4.500l-1.500-2.500 1-3-2.500-2.500z" fill="#169a3c"/><ellipse cx="4.500" cy="13.500" rx="3.600" ry="3" fill="#f2b01a"/></svg>
<span class="t" style="left:356px;top:93px;font-size:12px;line-height:16px;color:#111;letter-spacing:-0.042px;">Pesquisar</span>
<svg class="abs" style="left:412px;top:99px;" width="5" height="3" viewBox="0 0 5 3"><path d="M0 0h5l-2.5 3z" fill="#333"/></svg>
<div class="abs" style="left:423px;top:90px;width:1px;height:24px;background:#8f97a3"></div>
<svg class="abs" style="left:419px;top:97px;" width="11" height="7" viewBox="0 0 11 7"><path d="M0 3.500l3-3v6zM10.500 3.500l-3-3v6z" fill="#a4acba"/></svg>
<svg class="abs" style="left:432px;top:92px;" width="18" height="18" viewBox="0 0 18 18"><defs><radialGradient id="eg" cx=".4" cy=".3" r=".8"><stop offset="0" stop-color="#5a9ae0"/><stop offset=".5" stop-color="#1d4a94"/><stop offset="1" stop-color="#0c2148"/></radialGradient></defs><circle cx="9" cy="9" r="8.300" fill="url(#eg)"/><path d="M1.500 7c4-2.500 9-1.500 14.500 3.500" fill="none" stroke="#fff" stroke-width="2" opacity=".9"/><path d="M2 12c3-1 6 0 9 3" fill="none" stroke="#fff" stroke-width="1.200" opacity=".55"/></svg>
<svg class="abs" style="left:457px;top:93px;" width="17" height="16" viewBox="0 0 17 16"><g transform="rotate(-14 8 8)"><rect x="1" y="3" width="14" height="10" rx="1.500" fill="#f6e9d8" stroke="#c8543c" stroke-width="1.300"/><rect x="3" y="5.500" width="3.500" height="5" fill="#f2b24a"/><rect x="7.500" y="5.500" width="5.500" height="2" fill="#5a9be0"/><rect x="7.500" y="8.500" width="5.500" height="2" fill="#e0708a"/></g></svg>
<svg class="abs" style="left:478px;top:99px;" width="5" height="3" viewBox="0 0 5 3"><path d="M0 0h5l-2.5 3z" fill="#333"/></svg>
<svg class="abs" style="left:491px;top:92px;" width="19" height="19" viewBox="0 0 19 19"><rect x="1" y="1" width="17" height="17" fill="#fdf3f8"/><circle cx="9.500" cy="9.500" r="6.800" fill="#fff" stroke="#d8328e" stroke-width="1.300"/><text x="1.200" y="12" font-family="Liberation Sans,sans-serif" font-size="7" font-weight="bold" fill="#2a1a1a" textLength="16.500" lengthAdjust="spacingAndGlyphs">orkut</text></svg>
<svg class="abs" style="left:516px;top:93px;" width="17" height="17" viewBox="0 0 17 17"><path d="M6 1h5v5h5v5h-5v5h-5v-5h-5v-5h5z" fill="#8ab4e0" stroke="#4a7ab8" stroke-width="1.200" stroke-linejoin="round"/><path d="M7 2.500h3v4.500h4.500v1.500h-10.500v-1.500h3z" fill="#c4dcf4"/></svg>
<svg class="abs" style="left:535px;top:99px;" width="5" height="3" viewBox="0 0 5 3"><path d="M0 0h5l-2.5 3z" fill="#333"/></svg>
<div class="abs" style="left:547px;top:90px;width:1px;height:24px;background:#8f97a3"></div>
<svg class="abs" style="left:557px;top:93px;" width="17" height="17" viewBox="0 0 17 17"><defs><linearGradient id="shg" x1="0" y1="0" x2="0" y2="1"><stop offset="0" stop-color="#6aa840"/><stop offset="1" stop-color="#3a7a22"/></linearGradient></defs><rect x=".500" y=".500" width="16" height="16" rx="3" fill="url(#shg)" stroke="#3a6a24" stroke-width="1"/><circle cx="8.500" cy="8.500" r="2.600" fill="none" stroke="#d8f0c0" stroke-width="1.600"/><path d="M2.500 9.500c1-3 3-4.500 5-4M14.500 7.500c-1 3-3 4.500-5 4" fill="none" stroke="#d8f0c0" stroke-width="1.500"/></svg>
<span class="t" style="left:577px;top:93px;font-size:12px;line-height:16px;color:#111;letter-spacing:0.150px;">Compartilhar</span>
<svg class="abs" style="left:650px;top:99px;" width="5" height="3" viewBox="0 0 5 3"><path d="M0 0h5l-2.5 3z" fill="#333"/></svg>
<svg class="abs" style="left:664px;top:92px;" width="17" height="18" viewBox="0 0 17 18"><rect x="3.500" y="1.500" width="12" height="10" fill="#fff" stroke="#c0392b" stroke-width="1.300"/><rect x="1" y="6" width="11" height="10" fill="#fff" stroke="#2a3f8a" stroke-width="1.300"/><circle cx="8" cy="9" r="5" fill="none" stroke="#d8232a" stroke-width="1.800"/><path d="M4.500 5.500l7 7" stroke="#d8232a" stroke-width="1.800"/></svg>
<svg class="abs" style="left:685px;top:99px;" width="5" height="3" viewBox="0 0 5 3"><path d="M0 0h5l-2.5 3z" fill="#333"/></svg>
<svg class="abs" style="left:700px;top:93px;" width="16" height="17" viewBox="0 0 16 17"><path d="M1 1h13.500v10.500h-6l-3.500 4v-4h-4z" fill="#c9c9c9" stroke="#a8a8a8" stroke-width="1"/></svg>
<span class="t" style="left:719.5px;top:93px;font-size:12px;line-height:16px;color:#111;letter-spacing:-0.203px;">Google Sidewiki</span>
<svg class="abs" style="left:808px;top:99px;" width="5" height="3" viewBox="0 0 5 3"><path d="M0 0h5l-2.5 3z" fill="#333"/></svg>
<div class="abs" style="left:820px;top:90px;width:1px;height:24px;background:#8f97a3"></div>
<svg class="abs" style="left:829px;top:92px;" width="18" height="18" viewBox="0 0 18 18"><text x="0" y="6.500" font-family="Liberation Sans,sans-serif" font-size="7" font-weight="bold" fill="#222">ABC</text><path d="M3 11.500l4 4.500 9-10" fill="none" stroke="#5aa52a" stroke-width="3"/></svg>
<span class="t" style="left:850px;top:93px;font-size:12px;line-height:16px;color:#111;letter-spacing:-0.040px;">Verificar</span>
<svg class="abs" style="left:898px;top:99px;" width="5" height="3" viewBox="0 0 5 3"><path d="M0 0h5l-2.5 3z" fill="#333"/></svg>
<svg class="abs" style="left:912px;top:93px;" width="17" height="17" viewBox="0 0 17 17"><rect x=".500" y=".500" width="16" height="16" rx="2" fill="#d6e9fa" stroke="#4a8ad0" stroke-width="1"/><text x="2" y="12.500" font-family="Liberation Sans,sans-serif" font-size="10" fill="#123">aa</text><path d="M3 2.500h4" stroke="#123" stroke-width="1" stroke-dasharray="1 1"/></svg>
<span class="t" style="left:932.7px;top:93px;font-size:12px;line-height:16px;color:#111;letter-spacing:-0.160px;">Traduzir</span>
<svg class="abs" style="left:979px;top:99px;" width="5" height="3" viewBox="0 0 5 3"><path d="M0 0h5l-2.5 3z" fill="#333"/></svg>
<svg class="abs" style="left:993px;top:92px;" width="18" height="19" viewBox="0 0 18 19"><rect x="4.500" y="4" width="12" height="14" fill="#f7e48a" stroke="#b89a3a" stroke-width="1"/><path d="M7 8h7M7 11h7M7 14h5" stroke="#8a7a3a" stroke-width="1"/><path d="M1 2l3-1.500 6 8-1.500 2-2.500-.500z" fill="#e8b84a" stroke="#9a6a1a" stroke-width=".8"/></svg>
<span class="t" style="left:1014px;top:93px;font-size:12px;line-height:16px;color:#111;letter-spacing:0.067px;">Autopreencher</span>
<svg class="abs" style="left:1097px;top:99px;" width="5" height="3" viewBox="0 0 5 3"><path d="M0 0h5l-2.5 3z" fill="#333"/></svg>
<svg class="abs" style="left:1113px;top:93px;" width="17" height="17" viewBox="0 0 17 17"><path d="M1 12l9.700-12.400 4.300.800v9l-6.200 5.500h-6.600z" fill="#f7d716" stroke="#c9aa0a" stroke-width=".8"/><path d="M5.500 6.500l4 6.500M10.700-.400l-1.200 13.400" stroke="#d4b40c" stroke-width=".7" fill="none"/><path d="M1 12l4.500-5.500 4 6.500-.700 1.900h-6.600z" fill="#f2c80a" opacity=".7"/></svg>
<svg class="abs" style="left:1151px;top:93px;" width="17" height="17" viewBox="0 0 17 17"><path d="M7 6l7 7.500" stroke="#3a6a98" stroke-width="4.600" stroke-linecap="round"/><circle cx="5.600" cy="4.700" r="4" fill="#3a6a98"/><path d="M7 6l7 7.500" stroke="#a9d0ee" stroke-width="2.800" stroke-linecap="round"/><circle cx="5.600" cy="4.700" r="3" fill="#a9d0ee"/><path d="M5.300 4.700l-5-2.700 2.700-3z" fill="#e9eff8"/><circle cx="4.800" cy="3.800" r="1.300" fill="#e9eff8"/></svg>
<svg class="abs" style="left:1171px;top:99px;" width="5" height="3" viewBox="0 0 5 3"><path d="M0 0h5l-2.5 3z" fill="#333"/></svg>
<svg class="abs" style="left:1186px;top:93px;" width="17" height="17" viewBox="0 0 17 17"><defs><radialGradient id="cg" cx=".4" cy=".3" r=".8"><stop offset="0" stop-color="#f4f4f4"/><stop offset="1" stop-color="#b4b4b4"/></radialGradient></defs><circle cx="8.500" cy="8.500" r="7.800" fill="url(#cg)" stroke="#9a9a9a" stroke-width="1"/></svg>
<span class="t" style="left:1206.4px;top:93px;font-size:12px;line-height:16px;color:#111;letter-spacing:-0.252px;">Fazer login</span>
<svg class="abs" style="left:1267px;top:99px;" width="5" height="3" viewBox="0 0 5 3"><path d="M0 0h5l-2.5 3z" fill="#333"/></svg>
<svg class="abs" style="left:9px;top:122px;" width="16" height="16" viewBox="0 0 16 16"><path d="M8 .800l2.200 4.700 5.100.600-3.800 3.500 1 5.100-4.500-2.500-4.500 2.500 1-5.100-3.800-3.500 5.100-.600z" fill="#f9c62a" stroke="#c98a0a" stroke-width="1"/><path d="M8 3l1.500 3.300 3 .300-6 .500z" fill="#fde98a"/></svg>
<span class="t" style="left:29px;top:122px;font-size:12px;line-height:16px;color:#111;letter-spacing:-0.151px;">Favoritos</span>
<div class="abs" style="left:90px;top:119px;width:1px;height:21px;background:#a9b1bf"></div>
<svg class="abs" style="left:98px;top:122px;" width="17" height="16" viewBox="0 0 17 16"><path d="M8 .800l2.200 4.700 5.100.600-3.800 3.500 1 5.100-4.500-2.500-4.500 2.500 1-5.100-3.800-3.500 5.100-.600z" fill="#f9c62a" stroke="#c98a0a" stroke-width="1" transform="scale(.92)"/><path d="M8 10h5v-2.500l4 4-4 4v-2.500h-5z" fill="#4aa82a" stroke="#2f7a1a" stroke-width=".6"/></svg>
<svg class="abs" style="left:122px;top:121px;" width="18" height="18" viewBox="0 0 18 18"><circle cx="8.500" cy="9" r="5.600" fill="none" stroke="#2f8fe0" stroke-width="3"/><rect x="4.500" y="7.800" width="8.500" height="2.400" fill="#2f8fe0"/><path d="M10.500 10.300h6v4h-6z" fill="#f0f4fb"/><path d="M1.500 15C-.5 10 6 2 15.500 1.500" fill="none" stroke="#f0b63a" stroke-width="1.500"/></svg>
<span class="t" style="left:142px;top:122px;font-size:12px;line-height:16px;color:#111;letter-spacing:-0.336px;">Sites Sugeridos</span>
<svg class="abs" style="left:226px;top:128px;" width="7" height="4" viewBox="0 0 7 4"><path d="M0 0h7l-3.5 4z" fill="#111"/></svg>
<svg class="abs" style="left:244px;top:121px;" width="16" height="18" viewBox="0 0 16 18"><path d="M3.500.500h8l3.500 3.500v13h-11.500z" fill="#fff" stroke="#9aa0a8" stroke-width="1"/><circle cx="6.500" cy="11" r="3.600" fill="none" stroke="#2f8fe0" stroke-width="2.200"/><rect x="4" y="10.200" width="5.500" height="1.700" fill="#2f8fe0"/><path d="M8 12h4.500v3h-4.500z" fill="#fff"/><path d="M1 16C0 11 5 7 11 7" fill="none" stroke="#e8a93a" stroke-width="1.200"/></svg>
<span class="t" style="left:264px;top:122px;font-size:12px;line-height:16px;color:#111;font-weight:bold;letter-spacing:-0.214px;">Obtenha mais comple...</span>
<svg class="abs" style="left:400px;top:128px;" width="7" height="4" viewBox="0 0 7 4"><path d="M0 0h7l-3.5 4z" fill="#111"/></svg>
<div class="abs" style="left:7px;top:148px;width:24px;height:24px;border:1px solid #a0a7b2;border-bottom:none;border-radius:3px 0 0 0;background:linear-gradient(#f6f9fd,#dfe7f3)"></div>
<div class="abs" style="left:30px;top:148px;width:16px;height:24px;border:1px solid #a0a7b2;border-bottom:none;border-radius:0 3px 0 0;background:linear-gradient(#f6f9fd,#dfe7f3)"></div>
<svg class="abs" style="left:11px;top:154px;" width="16" height="13" viewBox="0 0 16 13"><rect x="0.5" y="0.5" width="6" height="4.500" rx="1" fill="#f4f6fa" stroke="#7a828e" stroke-width="1"/><rect x="0.5" y="7.5" width="6" height="4.500" rx="1" fill="#f4f6fa" stroke="#7a828e" stroke-width="1"/><rect x="8.5" y="0.5" width="6" height="4.500" rx="1" fill="#f4f6fa" stroke="#7a828e" stroke-width="1"/><rect x="8.5" y="7.5" width="6" height="4.500" rx="1" fill="#f4f6fa" stroke="#7a828e" stroke-width="1"/></svg>
<svg class="abs" style="left:35px;top:159px;" width="6" height="3" viewBox="0 0 6 3"><path d="M0 0h6l-3.0 3z" fill="#111"/></svg>
<div class="abs" style="left:46px;top:148px;width:179px;height:24px;border:1px solid #a0a7b2;border-bottom:none;border-radius:3px 3px 0 0;background:linear-gradient(#f7f9fd,#e9eff8 50%,#dce5f2)"></div>
<div class="abs" style="left:49px;top:153px;width:16px;height:16px;background:#12348a;border-radius:3px"><span class="t" style="left:0.5px;top:6px;font-size:8.5px;line-height:9px;font-weight:bold;color:#f2e11a;letter-spacing:-.5px">Itaú</span></div>
<span class="t" style="left:69.5px;top:153px;font-size:12px;line-height:16px;color:#111;letter-spacing:-0.211px;">Banco Itaú - Feito Para Você</span>
<div class="abs" style="left:225px;top:146px;width:178px;height:27px;border:1px solid #a0a7b2;border-bottom:none;border-radius:3px 3px 0 0;background:linear-gradient(#bfd8f6,#d9e8fa 40%,#f1f6fd 75%,#f8fbfe)"></div>
<svg class="abs" style="left:228px;top:152px;" width="16" height="16" viewBox="0 0 16 16"><circle cx="8" cy="8" r="6" fill="#fff" stroke="#3a9a96" stroke-width="2.600"/><circle cx="8" cy="8" r="6" fill="none" stroke="#7fd0cc" stroke-width="1" /><circle cx="8" cy="8" r="7.400" fill="none" stroke="#2a7a78" stroke-width=".6"/></svg>
<span class="t" style="left:248px;top:153px;font-size:12px;line-height:16px;color:#111;letter-spacing:-0.167px;">SgtWiki</span>
<svg class="abs" style="left:387px;top:156px;" width="10" height="9" viewBox="0 0 10 9"><path d="M1.500 1.500l7 6M8.500 1.500l-7 6" stroke="#7d838c" stroke-width="2.200"/></svg>
<div class="abs" style="left:403px;top:148px;width:30px;height:24px;border:1px solid #a0a7b2;border-bottom:none;border-radius:4px 4px 0 0;background:linear-gradient(#eef3fa,#dfe7f3)"></div>
<svg class="abs" style="left:847px;top:149px;" width="17" height="17" viewBox="0 0 17 17"><rect x="2.500" y="1" width="2.500" height="5" fill="#2a4ab0"/><path d="M8.500 1.500l7.500 7h-2v7.500h-11v-7.500h-2z" fill="#eef2f8" stroke="#4a62a8" stroke-width="1"/><path d="M8.500 3l5.500 5.200h-11z" fill="#dfe6f2"/><rect x="5" y="9" width="2.800" height="2.800" fill="#3a4a6a"/><rect x="9.500" y="9.500" width="3" height="6" fill="#2a4ab0"/></svg>
<svg class="abs" style="left:873px;top:156px;" width="7" height="4" viewBox="0 0 7 4"><path d="M0 0h7l-3.5 4z" fill="#111"/></svg>
<svg class="abs" style="left:891px;top:151px;" width="15" height="15" viewBox="0 0 15 15"><rect x=".500" y=".500" width="14" height="14" rx="2" fill="#f28a1e" stroke="#c8640a" stroke-width="1"/><circle cx="4" cy="11" r="1.500" fill="#fff"/><path d="M3 7a5 5 0 0 1 5 5M3 3.500a8.500 8.500 0 0 1 8.500 8.500" fill="none" stroke="#fff" stroke-width="1.600"/></svg>
<svg class="abs" style="left:917px;top:156px;" width="7" height="4" viewBox="0 0 7 4"><path d="M0 0h7l-3.5 4z" fill="#111"/></svg>
<svg class="abs" style="left:934px;top:153px;" width="15" height="10" viewBox="0 0 15 10"><rect x=".500" y=".500" width="13.500" height="9" fill="#fafafa" stroke="#a8a8a8" stroke-width="1"/><path d="M3 6.500h6" stroke="#b8b8b8" stroke-width="1"/><rect x="10" y="2" width="2.500" height="2.500" fill="#d84a4a"/></svg>
<svg class="abs" style="left:960px;top:150px;" width="18" height="17" viewBox="0 0 18 17"><rect x="4" y=".500" width="10" height="5" fill="#fff" stroke="#777" stroke-width="1"/><rect x=".500" y="5" width="17" height="7.500" rx="1.500" fill="#b9bec6" stroke="#5a6068" stroke-width="1"/><rect x="4" y="10" width="10" height="6" fill="#fff" stroke="#666" stroke-width="1"/><path d="M6 12.500h6M6 14.500h6" stroke="#444" stroke-width=".8"/></svg>
<svg class="abs" style="left:987px;top:156px;" width="7" height="4" viewBox="0 0 7 4"><path d="M0 0h7l-3.5 4z" fill="#111"/></svg>
<span class="t" style="left:1006px;top:150px;font-size:12px;line-height:16px;color:#111;letter-spacing:-0.229px;">Página</span>
<svg class="abs" style="left:1046px;top:156px;" width="7" height="4" viewBox="0 0 7 4"><path d="M0 0h7l-3.5 4z" fill="#111"/></svg>
<span class="t" style="left:1066px;top:150px;font-size:12px;line-height:16px;color:#111;letter-spacing:-0.339px;">Segurança</span>
<svg class="abs" style="left:1125px;top:156px;" width="7" height="4" viewBox="0 0 7 4"><path d="M0 0h7l-3.5 4z" fill="#111"/></svg>
<span class="t" style="left:1145px;top:150px;font-size:12px;line-height:16px;color:#111;letter-spacing:-0.276px;">Ferramentas</span>
<svg class="abs" style="left:1214px;top:156px;" width="7" height="4" viewBox="0 0 7 4"><path d="M0 0h7l-3.5 4z" fill="#111"/></svg>
<svg class="abs" style="left:1229px;top:149px;" width="17" height="17" viewBox="0 0 17 17"><defs><radialGradient id="hg" cx=".4" cy=".3" r=".8"><stop offset="0" stop-color="#8ab0f0"/><stop offset=".6" stop-color="#2a4fb0"/><stop offset="1" stop-color="#14286a"/></radialGradient></defs><circle cx="8.500" cy="8.500" r="8" fill="url(#hg)" stroke="#1a2f6a" stroke-width=".8"/><text x="5" y="13" font-family="Liberation Sans,sans-serif" font-size="12" font-weight="bold" fill="#fff">?</text></svg>
<svg class="abs" style="left:1248px;top:156px;" width="7" height="4" viewBox="0 0 7 4"><path d="M0 0h7l-3.5 4z" fill="#111"/></svg>
<span class="t" style="left:1268px;top:143px;font-size:13px;line-height:14px;color:#7484a2">»</span>
<div class="abs" style="left:0px;top:746px;width:1280px;height:1px;background:#f9f9f9"></div>
<div class="abs" style="left:0px;top:747px;width:1280px;height:23px;background:linear-gradient(#fafafa,#f0f0f0 30%,#ececec 90%,#fdfdfd);border-top:1px solid #a4a4a4"></div>
<span class="t" style="left:2.5px;top:752px;font-size:12px;line-height:16px;color:#111;letter-spacing:0.002px;">(1 item(ns) restante(s)) Fazendo o download da imagem http://www5.operacionaltextil.com.br:8099/sgtwiki/s</span>
<div class="abs" style="left:581px;top:750px;width:95px;height:18px;border:1px solid #b4b4b4;border-radius:3px;background:linear-gradient(#f2f2f2,#dadada 50%,#cdcdcd 51%,#e4e4e4)"></div>
<div class="abs" style="left:582px;top:751px;width:18px;height:16px;background:linear-gradient(#b8f5b0,#3fd02a 45%,#14b010 55%,#2fd83a);border-radius:2px 0 0 2px"></div>
<div class="abs" style="left:677px;top:749px;width:1px;height:20px;background:#d4d4d4"></div>
<div class="abs" style="left:678px;top:749px;width:1px;height:20px;background:#fbfbfb"></div>
<div class="abs" style="left:701px;top:749px;width:1px;height:20px;background:#d4d4d4"></div>
<div class="abs" style="left:702px;top:749px;width:1px;height:20px;background:#fbfbfb"></div>
<div class="abs" style="left:725px;top:749px;width:1px;height:20px;background:#d4d4d4"></div>
<div class="abs" style="left:726px;top:749px;width:1px;height:20px;background:#fbfbfb"></div>
<div class="abs" style="left:749px;top:749px;width:1px;height:20px;background:#d4d4d4"></div>
<div class="abs" style="left:750px;top:749px;width:1px;height:20px;background:#fbfbfb"></div>
<div class="abs" style="left:773px;top:749px;width:1px;height:20px;background:#d4d4d4"></div>
<div class="abs" style="left:774px;top:749px;width:1px;height:20px;background:#fbfbfb"></div>
<div class="abs" style="left:797px;top:749px;width:1px;height:20px;background:#d4d4d4"></div>
<div class="abs" style="left:798px;top:749px;width:1px;height:20px;background:#fbfbfb"></div>
<div class="abs" style="left:821px;top:749px;width:1px;height:20px;background:#d4d4d4"></div>
<div class="abs" style="left:822px;top:749px;width:1px;height:20px;background:#fbfbfb"></div>
<div class="abs" style="left:1134px;top:749px;width:1px;height:20px;background:#d4d4d4"></div>
<div class="abs" style="left:1135px;top:749px;width:1px;height:20px;background:#fbfbfb"></div>
<div class="abs" style="left:1179px;top:749px;width:1px;height:20px;background:#d4d4d4"></div>
<div class="abs" style="left:1180px;top:749px;width:1px;height:20px;background:#fbfbfb"></div>
<svg class="abs" style="left:826px;top:752px;" width="16" height="16" viewBox="0 0 16 16"><defs><radialGradient id="gg" cx=".4" cy=".3" r=".8"><stop offset="0" stop-color="#8fd0f8"/><stop offset=".6" stop-color="#2a78c8"/><stop offset="1" stop-color="#123c7a"/></radialGradient></defs><circle cx="8" cy="8" r="7.500" fill="url(#gg)"/><path d="M3 5c2-2 4-2.500 5-1.500s-1 2.500-.500 4 3 1 3.500 2.500-1.500 3-3 3-2-2-3.500-2.500-2.500-3-1.500-5.500z" fill="#4cb648"/><path d="M11 2.500c1.500.500 3 2 3.300 4l-2-.500z" fill="#4cb648"/></svg>
<span class="t" style="left:846px;top:752px;font-size:12px;line-height:16px;color:#111;letter-spacing:-0.030px;">Internet | Modo Protegido: Desativado</span>
<svg class="abs" style="left:1143px;top:751px;" width="17" height="17" viewBox="0 0 17 17"><path d="M1 7l5-4.500v2.500c4 0 6 2 6 6-1.500-2.500-3-3-6-3v2.500z" fill="#c9c9c9" stroke="#a0a0a0" stroke-width=".6"/><rect x="8" y="9" width="7.500" height="6.500" rx="1" fill="#d8d8d8" stroke="#8a8a8a" stroke-width=".8"/><path d="M9.500 9v-2a2.200 2.200 0 0 1 4.500 0v2" fill="none" stroke="#9a9a9a" stroke-width="1.300"/></svg>
<svg class="abs" style="left:1167px;top:758px;" width="7" height="4" viewBox="0 0 7 4"><path d="M0 0h7l-3.5 4z" fill="#222"/></svg>
<svg class="abs" style="left:1191px;top:751px;" width="13" height="14" viewBox="0 0 13 14"><circle cx="5" cy="5" r="4.200" fill="#dbe9fb" stroke="#5a7fb8" stroke-width="1.300"/><path d="M5 2.500v5M2.500 5h5" stroke="#1a5ad0" stroke-width="1.600"/><path d="M8 8.500l4 4.500" stroke="#8a6a3a" stroke-width="2.200" stroke-linecap="round"/></svg>
<span class="t" style="left:1205.6px;top:752px;font-size:12px;line-height:16px;color:#111;letter-spacing:-0.576px;">100%</span>
<svg class="abs" style="left:1250px;top:758px;" width="7" height="4" viewBox="0 0 7 4"><path d="M0 0h7l-3.5 4z" fill="#222"/></svg>
<svg class="abs" style="left:1270px;top:760px;" width="9" height="9" viewBox="0 0 9 9"><rect x="6" y="0" width="2" height="2" fill="#b4b4b4"/><rect x="3" y="3" width="2" height="2" fill="#b4b4b4"/><rect x="6" y="3" width="2" height="2" fill="#b4b4b4"/><rect x="0" y="6" width="2" height="2" fill="#b4b4b4"/><rect x="3" y="6" width="2" height="2" fill="#b4b4b4"/><rect x="6" y="6" width="2" height="2" fill="#b4b4b4"/></svg>
<div class="abs" style="left:0px;top:770px;width:1280px;height:30px;background:linear-gradient(#2a2b2e 0,#2a2b2e 1px,#808388 1px,#6c6f74 3px,#45484d 15px,#06080c 15px,#0a0c10 30px)"></div>
<svg class="abs" style="left:8px;top:764px;" width="44" height="40" viewBox="0 0 44 40"><defs><radialGradient id="og" cx=".5" cy=".45" r=".6"><stop offset="0" stop-color="#3a9ae0"/><stop offset=".55" stop-color="#1a62b0"/><stop offset=".85" stop-color="#0c3470"/><stop offset="1" stop-color="#07204a"/></radialGradient><radialGradient id="og2" cx=".5" cy="1" r=".55"><stop offset="0" stop-color="#4fd0f8" stop-opacity=".9"/><stop offset="1" stop-color="#4fd0f8" stop-opacity="0"/></radialGradient></defs><circle cx="22" cy="22" r="19.800" fill="#0e1a28" stroke="#4a5a6a" stroke-width=".8"/><circle cx="22" cy="22" r="17.800" fill="url(#og)"/><circle cx="22" cy="22" r="17.800" fill="url(#og2)"/><path d="M5.500 17a16.800 15.500 0 0 1 33 0a24 15 0 0 0-33 0z" fill="rgba(255,255,255,.38)"/><path d="M13.500 10.500c3-1.600 5.600-1.600 8.200 0l-2 7.300c-2.500-1.500-5.200-1.500-8.200 0z" fill="#f0582a"/><path d="M23 11.300c2.500 1.500 5.200 1.500 8.200-.3l-2 7.300c-3 1.800-5.700 1.800-8.200.3z" fill="#8cc63a"/><path d="M11 19.700c3-1.600 5.700-1.600 8.200 0l-2 7.300c-2.500-1.500-5.200-1.500-8.200 0z" fill="#3aa0e8"/><path d="M20.500 20.500c2.500 1.500 5.200 1.500 8.200-.3l-2 7.300c-3 1.800-5.700 1.800-8.200.3z" fill="#f8c42b"/></svg>
<svg class="abs" style="left:65px;top:779px;" width="16" height="14" viewBox="0 0 16 14"><rect x=".500" y=".500" width="15" height="12.500" fill="#2a5fb8" stroke="#dfe8f5" stroke-width="1"/><rect x="2.500" y="3" width="7" height="5" fill="#fff"/><rect x="6" y="6.500" width="7" height="4.500" fill="#dfe8f5" stroke="#2a5fb8" stroke-width=".6"/></svg>
<svg class="abs" style="left:88px;top:779px;" width="17" height="14" viewBox="0 0 17 14"><rect x=".500" y=".500" width="16" height="12.500" fill="#3a78d0" stroke="#c9d6e8" stroke-width="1"/><rect x="2" y="2" width="13" height="8" fill="#2458a8"/><path d="M3 9l5-4 6 4" fill="none" stroke="#6aa0e8" stroke-width="1"/></svg>
<svg class="abs" style="left:111px;top:776px;" width="17" height="17" viewBox="0 0 17 17"><path d="M1 8l6-5 6 5v8h-12z" fill="#f1e3b8" stroke="#a88a4a" stroke-width="1"/><path d="M0 8.500l7-6 7 6" fill="none" stroke="#c05a2a" stroke-width="1.500"/><rect x="5" y="10" width="3.500" height="6" fill="#8a5a2a"/><circle cx="12.500" cy="4.500" r="4" fill="#4a8ae0" stroke="#dfe8f5" stroke-width=".8"/><text x="11.300" y="7.300" font-family="Liberation Serif,serif" font-size="8" font-weight="bold" fill="#fff">i</text></svg>
<span class="t" style="left:145px;top:772px;font-size:14px;line-height:14px;color:#fff;font-weight:bold">»</span>
<div class="tk" style="left:161px;width:157px"></div><svg class="abs" style="left:170px;top:777px;" width="16" height="16" viewBox="0 0 16 16"><circle cx="5.500" cy="4.500" r="2.800" fill="#4a9ae0"/><path d="M1 13c0-4 2-5.500 4.500-5.500s4.500 1.500 4.500 5.500z" fill="#4a9ae0"/><circle cx="11" cy="5" r="2.500" fill="#6cc04a"/><path d="M7 13.500c0-3.500 1.800-5 4-5s4 1.500 4 5z" fill="#6cc04a"/><path d="M0 12.500c4-2 10-2.500 16 0l-1 3c-5-2-9-2-14 0z" fill="#f2b92a"/></svg><span class="t" style="left:190.5px;top:777px;font-size:12px;line-height:16px;color:#fff;letter-spacing:-0.227px;-webkit-text-stroke:.25px #fff;">Windows Live Mess...</span>
<div class="tk" style="left:320px;width:157px"></div><svg class="abs" style="left:329px;top:777px;" width="16" height="16" viewBox="0 0 16 16"><rect x="1" y="1" width="13" height="14" rx="2.500" fill="#fbe9c4" stroke="#f0b45a" stroke-width="1.200"/><circle cx="8.500" cy="9" r="5.500" fill="#fff6e0" stroke="#f2a83a" stroke-width="1.800"/><path d="M6 8.500l2.500 2.500 3.500-4" fill="none" stroke="#e08a1a" stroke-width="1.600"/></svg><span class="t" style="left:349px;top:777px;font-size:12px;line-height:16px;color:#fff;letter-spacing:-0.048px;-webkit-text-stroke:.25px #fff;">Calendário - Micros...</span>
<div class="tk" style="left:479px;width:157px"></div><svg class="abs" style="left:489px;top:776px;" width="15" height="18" viewBox="0 0 15 18"><path d="M1 3h5l1.500 2h6.500v12h-13z" fill="#f3d06a" stroke="#b8922a" stroke-width="1"/><rect x="3" y="1" width="8" height="14" fill="#f9eeb8" stroke="#c8a84a" stroke-width=".8"/><path d="M10 1l-4.500 5h2.500v5h4v-5h2.500z" fill="#3fae3a" stroke="#1f7a1a" stroke-width=".7"/></svg><span class="t" style="left:508px;top:777px;font-size:12px;line-height:16px;color:#fff;letter-spacing:-0.623px;-webkit-text-stroke:.25px #fff;">HelpSGT</span>
<div class="tk" style="left:638px;width:157px"></div><svg class="abs" style="left:648px;top:777px;" width="15" height="17" viewBox="0 0 15 17"><path d="M2.500.500h8l4 4v12h-12z" fill="#fff" stroke="#8a9ab8" stroke-width="1"/><rect x="0" y="4" width="9" height="9" fill="#2a5ab8"/><text x="1" y="11.500" font-family="Liberation Sans,sans-serif" font-size="8.500" font-weight="bold" fill="#fff">W</text><path d="M10 8h3M10 10.500h3M4 14.500h9" stroke="#8a9ab8" stroke-width="1"/></svg><span class="t" style="left:667.5px;top:777px;font-size:12px;line-height:16px;color:#fff;letter-spacing:-0.154px;-webkit-text-stroke:.25px #fff;">WIKI - instruçoes do...</span>
<div class="tk act" style="left:797px;width:157px"></div><svg class="abs" style="left:807px;top:776px;" width="18" height="18" viewBox="0 0 18 18"><circle cx="8.500" cy="9" r="5.600" fill="none" stroke="#2f9be6" stroke-width="3"/><rect x="4.500" y="7.800" width="8.500" height="2.400" fill="#2f9be6"/><path d="M10.500 10.300h6v4h-6z" fill="#0a0a0a"/><path d="M1.500 15C-.5 10 6 2 15.500 1.500" fill="none" stroke="#f0b63a" stroke-width="1.500"/></svg><span class="t" style="left:827px;top:777px;font-size:12px;line-height:16px;color:#fff;letter-spacing:-0.168px;-webkit-text-stroke:.25px #fff;">SgtWiki - Windows I...</span>
<span class="t" style="left:966px;top:775px;font-size:12px;line-height:16px;color:#fff;letter-spacing:-0.900px;">PT</span>
<svg class="abs" style="left:995px;top:780px;" width="8" height="10" viewBox="0 0 8 10"><path d="M7 1l-5 4 5 4" fill="none" stroke="#fff" stroke-width="2"/></svg>
<svg class="abs" style="left:1009px;top:776px;" width="15" height="12" viewBox="0 0 15 12"><rect x=".500" y=".500" width="14" height="10.500" fill="#f7d35a" stroke="#c89a1a" stroke-width="1"/><path d="M1 1l6.500 5.500 6.500-5.500" fill="none" stroke="#c89a1a" stroke-width="1"/></svg>
<svg class="abs" style="left:1027px;top:775px;" width="16" height="16" viewBox="0 0 16 16"><rect x="1" y="1" width="13" height="14" rx="2.500" fill="#fbe9c4" stroke="#f0b45a" stroke-width="1.200"/><circle cx="8.500" cy="9" r="5.500" fill="#fff6e0" stroke="#f2a83a" stroke-width="1.800"/><path d="M6 8.500l2.500 2.500 3.500-4" fill="none" stroke="#e08a1a" stroke-width="1.600"/></svg>
<svg class="abs" style="left:1046px;top:775px;" width="15" height="17" viewBox="0 0 15 17"><circle cx="6" cy="4" r="3.200" fill="#a4cdf0"/><path d="M1 16c0-5.500 2-8 5-8s5 2.500 5 8z" fill="#a4cdf0"/><rect x="8" y="10" width="7" height="6" rx="1" fill="#5ad03a" stroke="#2a8a1a" stroke-width=".8"/></svg>
<svg class="abs" style="left:1064px;top:774px;" width="14" height="18" viewBox="0 0 14 18"><ellipse cx="7" cy="9" rx="6.500" ry="8.500" fill="#1c3c88"/><path d="M3.500 5.500l7 7-3.500 3v-13l3.500 3-7 7" fill="none" stroke="#fff" stroke-width="1.400"/></svg>
<svg class="abs" style="left:1081px;top:775px;" width="16" height="17" viewBox="0 0 16 17"><rect x="1.500" y=".500" width="13" height="9" fill="#1a1c22" stroke="#e8eef8" stroke-width="1"/><rect x="3" y="2" width="5" height="6" fill="#c8302a"/><path d="M9.500 5l2.500-3 2.500 3-2.500 3z" fill="#2a9a3a"/><rect x="1" y="11" width="14" height="4.500" fill="#e4e4e4" stroke="#fff" stroke-width=".8"/><path d="M3 13.200h7" stroke="#c8302a" stroke-width="1"/></svg>
<svg class="abs" style="left:1099px;top:775px;" width="17" height="17" viewBox="0 0 17 17"><rect x=".500" y=".500" width="16" height="16" rx="3.500" fill="#d8182a" stroke="#f4a0a8" stroke-width="1"/><path d="M11 2.500c-5 2-7.500 6-6 10.500 1.500 2.500 5 2 6-.500 1-3-1-6-3.500-5" fill="none" stroke="#fff" stroke-width="1.800"/></svg>
<svg class="abs" style="left:1117px;top:775px;" width="17" height="17" viewBox="0 0 17 17"><rect x="3.500" y=".500" width="13" height="12" fill="#2a58b0" stroke="#8ab0e8" stroke-width="1"/><rect x=".500" y="3" width="13" height="12" fill="#244fa8" stroke="#8ab0e8" stroke-width="1"/><path d="M3 6h8M3 9h8M3 12h8M5 5v9M9 5v9" stroke="#8ab8f4" stroke-width=".7"/></svg>
<svg class="abs" style="left:1136px;top:775px;" width="16" height="17" viewBox="0 0 16 17"><path d="M1 1c3 1 7 5 10 10l-3 1c-2-4-5-8-7-11z" fill="#c9d2e0" stroke="#7a8aa8" stroke-width=".8"/><path d="M8 12l3-1 4 5z" fill="#3a78d8"/><path d="M3 9c4-3 8-2 10 2" fill="none" stroke="#9ac0f4" stroke-width="1"/></svg>
<svg class="abs" style="left:1153px;top:774px;" width="17" height="18" viewBox="0 0 17 18"><rect x="9" y="2" width="7" height="8" fill="#2a5fc0"/><rect x="9" y="10" width="7" height="7" fill="#d8302a"/><rect x="1" y="10" width="8" height="7" fill="#3aa83a"/><text x=".500" y="13.500" font-family="Liberation Sans,sans-serif" font-size="15" font-weight="bold" fill="#f7c81a" stroke="#b8860a" stroke-width=".4">A</text></svg>
<svg class="abs" style="left:1184px;top:774px;" width="11" height="18" viewBox="0 0 11 18"><rect x="3.500" y=".500" width="4" height="2" fill="#e8e8e8"/><rect x="1" y="2.500" width="9" height="14.500" rx="1.500" fill="#f4f4f4" stroke="#fff" stroke-width="1"/><rect x="3" y="8" width="5" height="7" fill="#3ac83a"/><rect x="3" y="4.500" width="5" height="3" fill="#2a2a2a"/></svg>
<svg class="abs" style="left:1199px;top:775px;" width="17" height="17" viewBox="0 0 17 17"><rect x=".500" y="4" width="9" height="7" fill="#3a78d8" stroke="#e8eef8" stroke-width="1"/><rect x="5.500" y=".500" width="9" height="7" fill="#3a78d8" stroke="#e8eef8" stroke-width="1"/><path d="M3 13.500h5M8 9.500v3" stroke="#e8eef8" stroke-width="1.200"/><circle cx="12" cy="12" r="4.500" fill="#2a8ad8" stroke="#bfe0f8" stroke-width=".6"/><path d="M9.500 11c1.500-1.500 3-1 3.500 0s-1 2 0 3.500" fill="none" stroke="#5ad04a" stroke-width="1.400"/></svg>
<svg class="abs" style="left:1217px;top:776px;" width="17" height="15" viewBox="0 0 17 15"><path d="M1 5h3l4.500-4v13l-4.500-4h-3z" fill="#f1f1f1" stroke="#fff" stroke-width=".6"/><path d="M10.500 4.500c1.300 1.500 1.300 4.500 0 6M12.500 2.500c2.300 2.500 2.300 7.500 0 10" fill="none" stroke="#5ad04a" stroke-width="1.300"/></svg>
<span class="t" style="left:1239.8px;top:777px;font-size:12px;line-height:16px;color:#fff;letter-spacing:-0.706px;">19:29</span>
</body>
</html>
